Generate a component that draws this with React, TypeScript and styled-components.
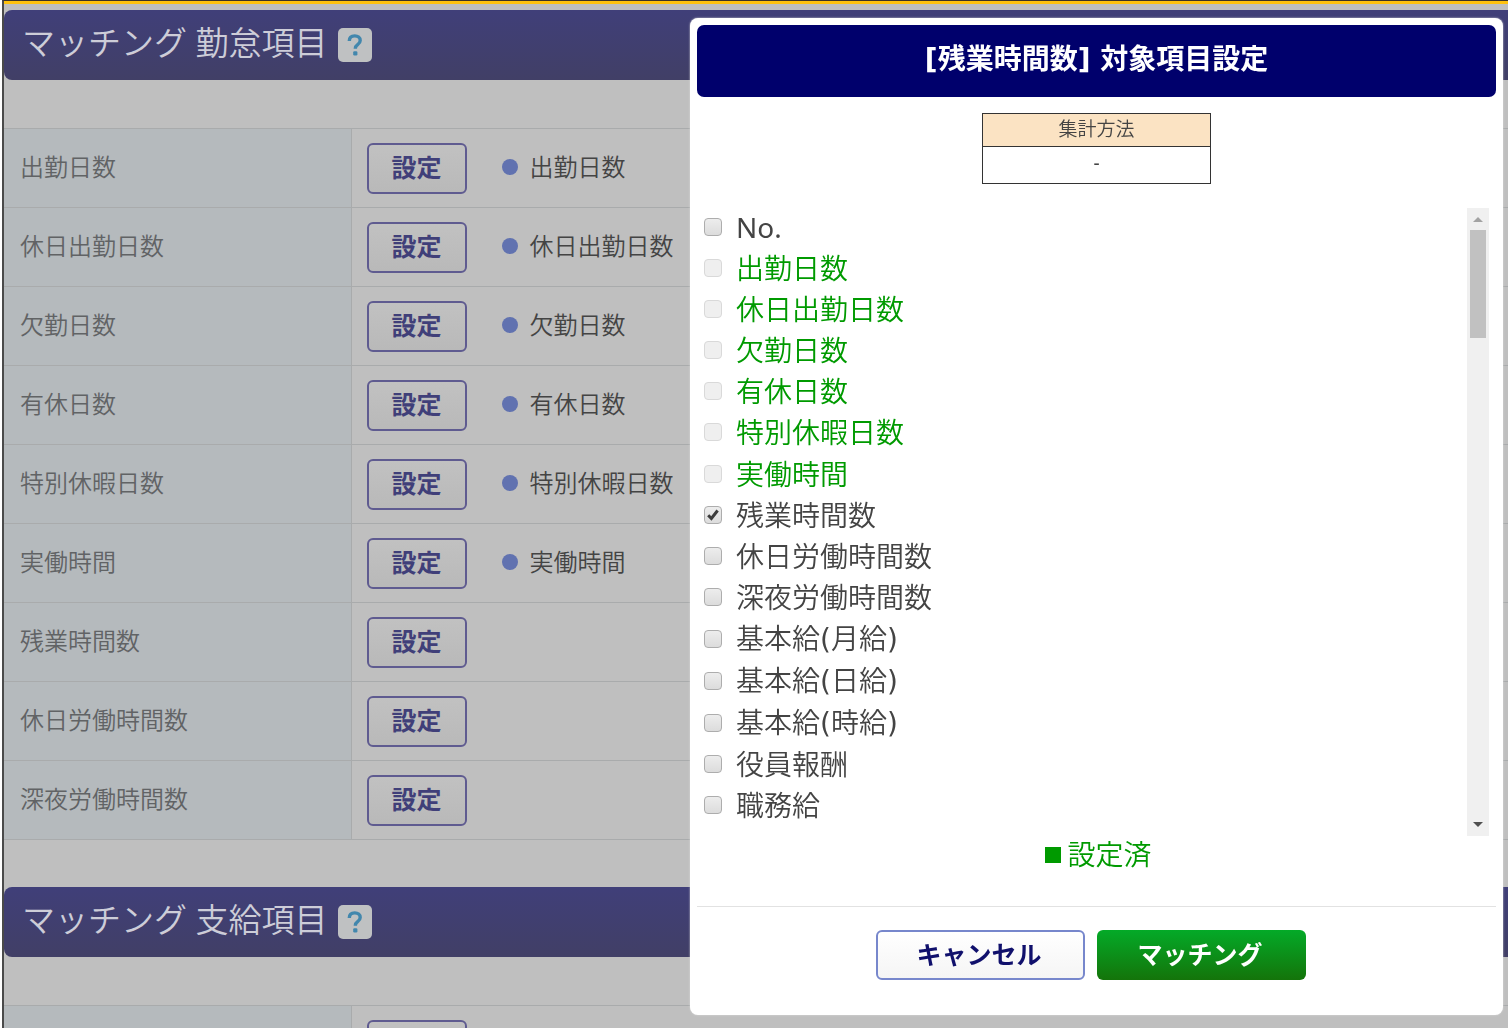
import React from "react";
import styled, { createGlobalStyle } from "styled-components";

const GlobalStyle = createGlobalStyle`
  *, *::before, *::after { box-sizing: border-box; }
  body {
    margin: 0;
    background: #fff;
    font-family: "Noto Sans", "Noto Sans CJK JP", sans-serif;
  }
  button, input { font-family: inherit; }
`;

const Page = styled.div`
  height: 100vh;
  overflow: hidden;
  padding-left: 2px;
`;

const Content = styled.main`
  min-height: 100%;
  background: #bfbfbf;
  border-top: 1px solid #3c3428;
  border-left: 2px solid #4a4a4a;
`;

const Accent = styled.div`
  height: 3px;
  margin-bottom: 6px;
  background: #ffc20e;
`;

const SectionHead = styled.header`
  display: flex;
  align-items: center;
  gap: 10px;
  height: 70px;
  padding: 0 18px;
  border-radius: 8px 0 0 8px;
  background: linear-gradient(#403f79, #413f66);
`;

const SectionTitle = styled.h2`
  margin: 0;
  padding-bottom: 4px;
  font-size: 33px;
  line-height: 48px;
  font-weight: 350;
  color: #cdcdd8;
`;

const HelpButton = styled.button`
  display: flex;
  align-items: center;
  justify-content: center;
  width: 34px;
  height: 34px;
  padding: 0;
  border: 0;
  border-radius: 5px;
  background: #bfc1c2;
`;

const MatchTable = styled.table`
  width: 100%;
  margin: 48px 0 47px;
  border-collapse: collapse;
  border-top: 1px solid #a9abac;
  table-layout: fixed;
`;

const Row = styled.tr`
  height: 79px;
  border-bottom: 1px solid #a9abac;
`;

const RowLabel = styled.th`
  width: 347px;
  padding: 0 16px 2px;
  border-right: 1px solid #a9abac;
  background: #b5babd;
  text-align: left;
  font-size: 24px;
  line-height: 36px;
  font-weight: 350;
  color: #616365;
`;

const RowCell = styled.td`
  padding: 0 15px;
`;

const CellBody = styled.div`
  display: flex;
  align-items: center;
  gap: 35px;
`;

const SettingButton = styled.button`
  width: 100px;
  height: 51px;
  padding: 0 0 2px;
  border: 2px solid #5f5b90;
  border-radius: 6px;
  background: linear-gradient(#c1c1c1, #b9b9b9);
  font-size: 25px;
  line-height: 36px;
  font-weight: 700;
  color: #403f79;
`;

const Matched = styled.span`
  display: flex;
  align-items: center;
  gap: 12px;
  padding-bottom: 2px;
  font-size: 24px;
  line-height: 36px;
  font-weight: 350;
  color: #444;

  &::before {
    content: "";
    width: 16px;
    height: 16px;
    border-radius: 50%;
    background: #6172b0;
  }
`;

const Overlay = styled.div`
  position: fixed;
  inset: 0;
  display: flex;
  justify-content: flex-end;
  padding: 18px 5px 13px;
`;

const Dialog = styled.section`
  display: flex;
  flex-direction: column;
  width: 813px;
  max-width: 100%;
  padding: 7px;
  border-radius: 8px;
  background: #fff;
  box-shadow: 0 0 2px #ddd;
  color: #444;
`;

const DialogTitle = styled.h1`
  margin: 0 0 16px;
  padding: 14px 0 16px;
  border-radius: 7px;
  background: #00006c;
  text-align: center;
  font-family: "DejaVu Sans", "Noto Sans CJK JP", sans-serif;
  font-size: 28px;
  line-height: 42px;
  font-weight: 700;
  color: #fff;
`;

const MethodTable = styled.table`
  align-self: center;
  width: 229px;
  border-collapse: collapse;
  font-size: 19px;
  line-height: 28px;

  th, td {
    border: 1px solid #333;
    text-align: center;
    font-weight: 350;
  }
  th { height: 33px; padding: 0 0 3px; background: #fbe3c3; }
  td { height: 37px; padding: 0 0 5px; font-weight: 400; }
`;

const ListArea = styled.div`
  display: flex;
  flex: 1;
  min-height: 0;
  margin-top: 24px;
  padding: 0 7px;
`;

const ItemList = styled.ul`
  flex: 1;
  display: grid;
  grid-auto-rows: 1fr;
  margin: 0;
  padding: 0 0 8px;
  list-style: none;
`;

const ItemLabel = styled.label<{ $done: boolean }>`
  display: flex;
  align-items: center;
  gap: 14px;
  height: 100%;
  font-size: 28px;
  line-height: 36px;
  font-weight: 350;
  color: ${(p) => (p.$done ? "#009a00" : "#444")};
`;

const ItemText = styled.span`
  padding-bottom: 4px;
`;

const Latin = styled.span`
  font-weight: 400;
`;

const Paren = styled(Latin)`
  font-family: "DejaVu Sans", sans-serif;
`;

const CheckWrap = styled.span`
  position: relative;
  display: flex;
  margin-bottom: 4px;

  svg {
    position: absolute;
    inset: 0;
    pointer-events: none;
  }
`;

const Check = styled.input`
  appearance: none;
  width: 18px;
  height: 18px;
  margin: 0;
  border: 1px solid #adadad;
  border-radius: 4px;
  background: linear-gradient(#ededed, #dcdcdc);

  &:disabled {
    border-color: #d9d9d9;
    background: #efefef;
  }
`;

const ScrollTrack = styled.div`
  display: flex;
  flex-direction: column;
  align-items: center;
  width: 22px;
  background: #f0f0f0;
`;

const ScrollArrow = styled.svg`
  width: 22px;
  height: 22px;
`;

const ScrollThumb = styled.div`
  width: 16px;
  height: 108px;
  margin-bottom: auto;
  background: #c1c1c1;
`;

const Legend = styled.p`
  display: flex;
  align-items: center;
  justify-content: center;
  gap: 6px;
  margin: 0;
  padding: 0 0 34px 4px;
  font-size: 28px;
  line-height: 36px;
  font-weight: 350;
  color: #009a00;

  &::before {
    content: "";
    width: 16px;
    height: 16px;
    margin-top: 2px;
    background: #009a00;
  }
`;

const Actions = styled.footer`
  display: flex;
  justify-content: center;
  gap: 12px;
  padding: 23px 12px 28px 0;
  border-top: 1px solid #e2e2e2;
`;

const ActionButton = styled.button<{ $primary?: boolean }>`
  width: 209px;
  height: 50px;
  padding: 0 2px 2px 0;
  border: ${(p) => (p.$primary ? "0" : "2px solid #7787cc")};
  border-radius: 6px;
  background: ${(p) =>
    p.$primary
      ? "linear-gradient(#04aa28, #14740a)"
      : "linear-gradient(#fff, #f5f5f5)"};
  font-size: 25px;
  line-height: 36px;
  font-weight: 700;
  color: ${(p) => (p.$primary ? "#fff" : "#10106c")};
`;

const attendance = [
  { name: "出勤日数", matched: true },
  { name: "休日出勤日数", matched: true },
  { name: "欠勤日数", matched: true },
  { name: "有休日数", matched: true },
  { name: "特別休暇日数", matched: true },
  { name: "実働時間", matched: true },
  { name: "残業時間数", matched: false },
  { name: "休日労働時間数", matched: false },
  { name: "深夜労働時間数", matched: false },
];

const options = [
  { name: "No." },
  { name: "出勤日数", done: true },
  { name: "休日出勤日数", done: true },
  { name: "欠勤日数", done: true },
  { name: "有休日数", done: true },
  { name: "特別休暇日数", done: true },
  { name: "実働時間", done: true },
  { name: "残業時間数", checked: true },
  { name: "休日労働時間数" },
  { name: "深夜労働時間数" },
  { name: "基本給(月給)" },
  { name: "基本給(日給)" },
  { name: "基本給(時給)" },
  { name: "役員報酬" },
  { name: "職務給" },
];

function Section({ title }: { title: string }) {
  return (
    <SectionHead>
      <SectionTitle>{title}</SectionTitle>
      <HelpButton type="button" aria-label="ヘルプ">
        <svg width="20" height="24" viewBox="0 0 20 24" fill="none">
          <path
            d="M4.3 8C4.3 4.6 6.6 2.9 9.8 2.9c3.1 0 5.4 1.7 5.4 4.5 0 2-1 3-2.6 4.2-1.6 1.1-2.3 2-2.3 4.1"
            stroke="#4287ad"
            strokeWidth="3.4"
          />
          <rect x="8.2" y="18.2" width="4.2" height="4.2" rx="1.2" fill="#4287ad" />
        </svg>
      </HelpButton>
    </SectionHead>
  );
}

function MixedText({ text }: { text: string }) {
  return (
    <ItemText>
      {text.split(/([A-Za-z.]+|[()])/).map((part, i) => {
        if (/^[()]$/.test(part)) return <Paren key={i}>{part}</Paren>;
        if (/^[A-Za-z.]+$/.test(part)) return <Latin key={i}>{part}</Latin>;
        return part;
      })}
    </ItemText>
  );
}

function OptionItem({ name, done = false, checked = false }: { name: string; done?: boolean; checked?: boolean }) {
  const [on, setOn] = React.useState(checked);
  return (
    <li>
      <ItemLabel $done={done}>
        <CheckWrap>
          <Check type="checkbox" checked={on} disabled={done} onChange={() => setOn(!on)} />
          {on && (
            <svg width="18" height="18" viewBox="0 0 18 18" fill="none">
              <path d="M4.2 9.2l3.2 3.3 6.2-8" stroke="#3c3c3c" strokeWidth="3" />
            </svg>
          )}
        </CheckWrap>
        <MixedText text={name} />
      </ItemLabel>
    </li>
  );
}

export default function App() {
  return (
    <>
      <GlobalStyle />
      <Page>
        <Content>
          <Accent />
          <Section title="マッチング 勤怠項目" />
          <MatchTable>
            <tbody>
              {attendance.map((row) => (
                <Row key={row.name}>
                  <RowLabel scope="row">{row.name}</RowLabel>
                  <RowCell>
                    <CellBody>
                      <SettingButton type="button">設定</SettingButton>
                      {row.matched && <Matched>{row.name}</Matched>}
                    </CellBody>
                  </RowCell>
                </Row>
              ))}
            </tbody>
          </MatchTable>
          <Section title="マッチング 支給項目" />
          <MatchTable>
            <tbody>
              <Row>
                <RowLabel scope="row" />
                <RowCell>
                  <CellBody>
                    <SettingButton type="button" aria-label="設定" />
                  </CellBody>
                </RowCell>
              </Row>
            </tbody>
          </MatchTable>
        </Content>
      </Page>
      <Overlay>
        <Dialog role="dialog" aria-labelledby="dialog-title">
          <DialogTitle id="dialog-title">[残業時間数] 対象項目設定</DialogTitle>
          <MethodTable>
            <thead>
              <tr>
                <th scope="col">集計方法</th>
              </tr>
            </thead>
            <tbody>
              <tr>
                <td>-</td>
              </tr>
            </tbody>
          </MethodTable>
          <ListArea>
            <ItemList>
              {options.map((o) => (
                <OptionItem key={o.name} {...o} />
              ))}
            </ItemList>
            <ScrollTrack>
              <ScrollArrow viewBox="0 0 22 22">
                <path d="M6 14l5-5 5 5z" fill="#a3a3a3" />
              </ScrollArrow>
              <ScrollThumb />
              <ScrollArrow viewBox="0 0 22 22">
                <path d="M6 8l5 5 5-5z" fill="#505050" />
              </ScrollArrow>
            </ScrollTrack>
          </ListArea>
          <Legend>設定済</Legend>
          <Actions>
            <ActionButton type="button">キャンセル</ActionButton>
            <ActionButton type="button" $primary>
              マッチング
            </ActionButton>
          </Actions>
        </Dialog>
      </Overlay>
    </>
  );
}
